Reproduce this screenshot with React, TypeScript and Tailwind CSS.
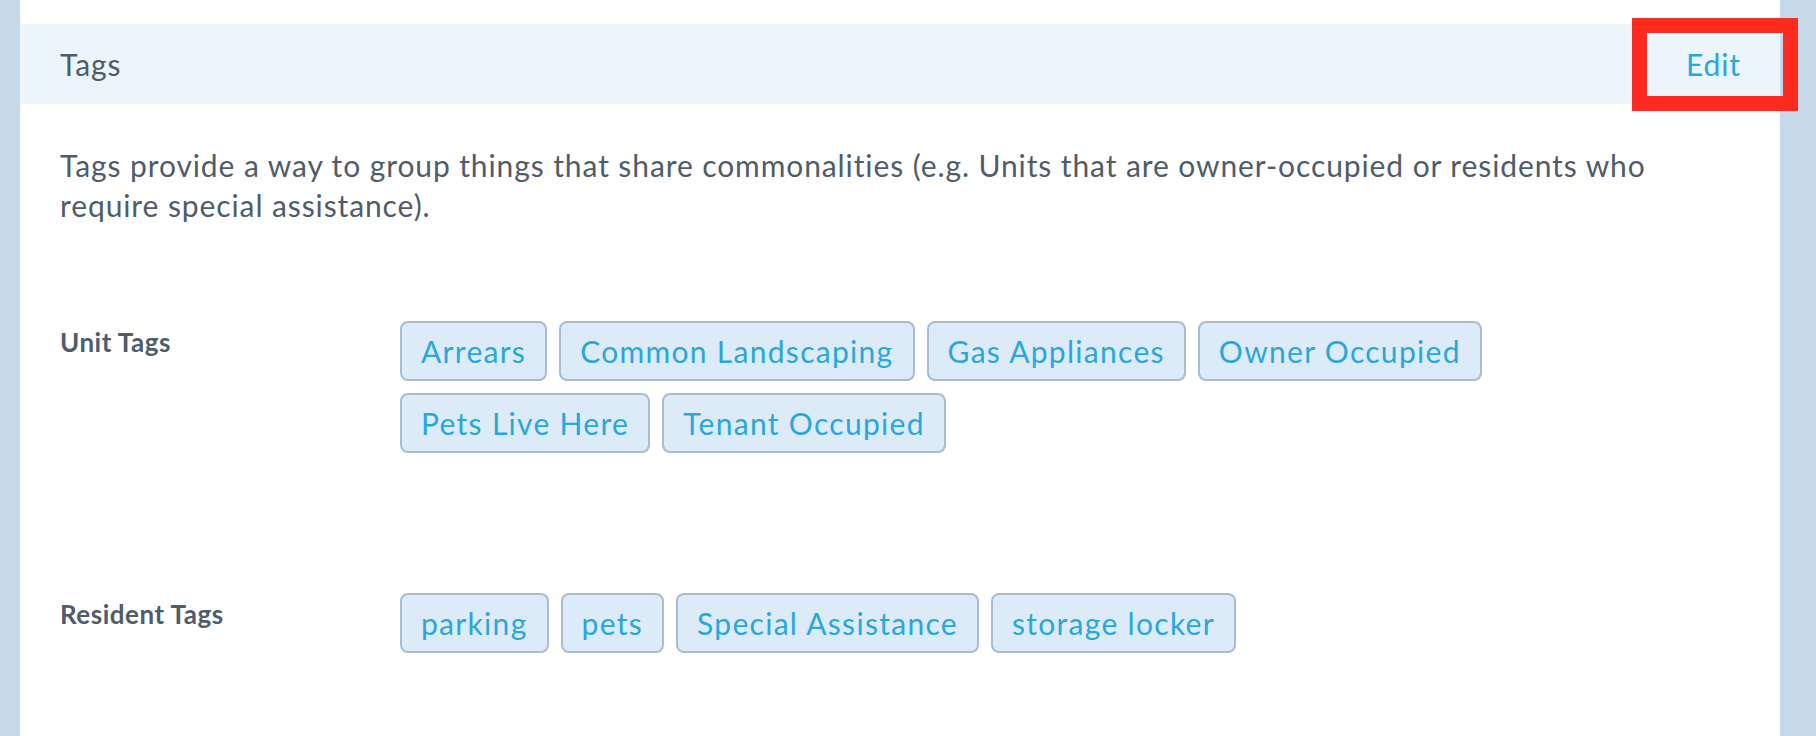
import React from "react";

const unitTags = ["Arrears", "Common Landscaping", "Gas Appliances", "Owner Occupied", "Pets Live Here", "Tenant Occupied"];
const residentTags = ["parking", "pets", "Special Assistance", "storage locker"];

function Tag({ label }: { label: string }) {
    return (
        <span className="inline-flex h-[60px] items-center rounded-[8px] border-2 border-[#a9bdcf] bg-[#ddebf8] px-[19px] text-[30px] leading-[40px] tracking-[1.3px] text-[#27a8dc]">
            {label}
        </span>
    );
}

function TagRow({ title, tags, className }: { title: string; tags: string[]; className?: string }) {
    return (
        <div className={`flex ${className ?? ""}`}>
            <div className="w-[340px] shrink-0 pt-[1px] text-[26px] font-bold leading-[40px] tracking-[0.5px] text-[#4f5c6b]">
                {title}
            </div>
            <div className="flex max-w-[1100px] flex-wrap gap-x-[12px] gap-y-[12px]">
                {tags.map((t) => (
                    <Tag key={t} label={t} />
                ))}
            </div>
        </div>
    );
}

export default function App() {
    return (
        <div className="flex h-[736px] w-full overflow-hidden bg-white font-['Lato',sans-serif]">
            <div className="w-[20px] shrink-0 bg-[#c6d9e9]" />

            <div className="flex-1 pt-[24px]">
                {/* panel header */}
                <div className="relative flex h-[80px] items-center justify-between bg-[#ecf4fc] pl-[40px]">
                    <h2 className="text-[30px] leading-[40px] tracking-[0.9px] text-[#4f5c6b]">Tags</h2>
                    <button className="h-[64px] w-[133px] text-[30px] leading-[40px] tracking-[0.9px] text-[#27a8dc]">Edit</button>
                    {/* annotation */}
                    <div className="pointer-events-none absolute right-[-18px] top-[-6px] z-10 h-[93px] w-[166px] border-[15px] border-[#fd2b1f]" />
                </div>

                <div className="px-[40px] pt-[41px]">
                    <p className="max-w-[1640px] text-[30px] leading-[40px] tracking-[0.9px] text-[#4f5c6b]">
                        Tags provide a way to group things that share commonalities (e.g. Units that are owner-occupied or residents who require special assistance).
                    </p>

                    <TagRow title="Unit Tags" tags={unitTags} className="mt-[96px]" />
                    <TagRow title="Resident Tags" tags={residentTags} className="mt-[140px]" />
                </div>
            </div>

            <div className="w-[36px] shrink-0 bg-[#c6d9e9]" />
        </div>
    );
}
